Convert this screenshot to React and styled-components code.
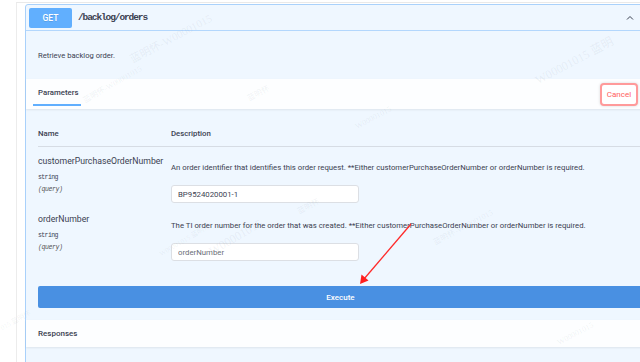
import React from "react";
import styled, { createGlobalStyle } from "styled-components";

const GlobalStyle = createGlobalStyle`
  html, body {
    margin: 0;
    padding: 0;
    background: #fff;
    overflow: hidden;
  }
  body {
    font-family: Roboto, "Open Sans", sans-serif;
    color: #3b4151;
  }
`;

const params = [
  {
    name: "customerPurchaseOrderNumber",
    description:
      "An order identifier that identifies this order request. **Either customerPurchaseOrderNumber or orderNumber is required.",
    value: "BP9524020001-1",
  },
  {
    name: "orderNumber",
    description:
      "The TI order number for the order that was created. **Either customerPurchaseOrderNumber or orderNumber is required.",
    value: "",
  },
];

const watermarks = [
  { x: 134, y: 50, size: 11, angle: -28, text: "蓝明怀-W00001015" },
  { x: 86, y: 94, size: 8, angle: -30, text: "蓝明怀-W00001015" },
  { x: 540, y: 70, size: 12, angle: -28, text: "W00001015  蓝明" },
  { x: 358, y: 122, size: 8, angle: -28, text: "W00001015" },
  { x: 300, y: 205, size: 8, angle: -28, text: "蓝明怀" },
  { x: 214, y: 244, size: 12, angle: -30, text: "W00001015" },
  { x: 162, y: 248, size: 7, angle: -30, text: "W00001015 蓝明怀" },
  { x: 436, y: 236, size: 8, angle: -28, text: "蓝明怀-W00001015" },
  { x: 3, y: 322, size: 7, angle: -28, text: "015  蓝明怀" },
  { x: 560, y: 338, size: 8, angle: -28, text: "W00001015" },
  { x: 250, y: 92, size: 8, angle: -28, text: "蓝明怀" },
];

function App() {
  return (
    <>
      <GlobalStyle />
      <Screen>
        <Frame>
          <OpBlock>
            <Summary>
              <Method>GET</Method>
              <Path>/backlog/orders</Path>
              <Chevron viewBox="0 0 20 20">
                <path d="M4 13 L10 7 L16 13" fill="none" stroke="#3b4151" strokeWidth="2" />
              </Chevron>
            </Summary>
            <Description>Retrieve backlog order.</Description>
            <SectionHeader>
              <Tab>Parameters</Tab>
              <CancelButton>Cancel</CancelButton>
            </SectionHeader>
            <ParamTable>
              <HeadCell>Name</HeadCell>
              <HeadCell>Description</HeadCell>
              <HeadRule />
              {params.map((p) => (
                <React.Fragment key={p.name}>
                  <NameCell>
                    <ParamName>{p.name}</ParamName>
                    <ParamType>string</ParamType>
                    <ParamIn>(query)</ParamIn>
                  </NameCell>
                  <DescCell>
                    <ParamDesc>{p.description}</ParamDesc>
                    <ParamInput
                      defaultValue={p.value}
                      placeholder={p.name}
                    />
                  </DescCell>
                </React.Fragment>
              ))}
            </ParamTable>
            <ExecuteWrapper>
              <ExecuteButton>Execute</ExecuteButton>
            </ExecuteWrapper>
            <ResponsesHeader>Responses</ResponsesHeader>
          </OpBlock>
        </Frame>
        {watermarks.map((w, i) => (
          <Watermark
            key={i}
            style={{
              left: w.x,
              top: w.y,
              fontSize: w.size,
              transform: `rotate(${w.angle}deg)`,
            }}
          >
            {w.text}
          </Watermark>
        ))}
        <Arrow viewBox="0 0 640 362">
          <path d="M411 224 L364 279" stroke="#ff2a2a" strokeWidth="1.3" fill="none" />
          <polygon points="360,284 361.5,274.5 368.5,280.5" fill="#ff1f1f" />
        </Arrow>
      </Screen>
    </>
  );
}

const Screen = styled.div`
  position: relative;
  width: 640px;
  height: 362px;
  overflow: hidden;
  background: #fff;
`;

const Frame = styled.div`
  margin: 2px 0 0 16px;
  height: 360px;
  border-top: 1px solid #e9e9e9;
  border-left: 1px solid #ececec;
  padding: 1px 0 0 8px;
  box-sizing: border-box;
`;

const OpBlock = styled.div`
  width: 631px;
  border: 1px solid #a9d1fb;
  border-radius: 3px;
  background: #eff7ff;
  box-sizing: border-box;
`;

const Summary = styled.div`
  display: flex;
  align-items: center;
  height: 26px;
  padding: 0 3px;
  border-bottom: 1px solid #b3d7fd;
  box-sizing: border-box;
`;

const Method = styled.div`
  width: 43px;
  height: 20px;
  border-radius: 2px;
  background: #61affe;
  color: #fff;
  font-size: 8.5px;
  font-weight: 500;
  display: flex;
  align-items: center;
  justify-content: center;
  text-shadow: 0 1px 0 rgba(0, 0, 0, 0.1);
`;

const Path = styled.div`
  margin-left: 6px;
  font-family: "Liberation Mono", "DejaVu Sans Mono", monospace;
  font-size: 9.5px;
  letter-spacing: -1.1px;
  font-weight: 700;
  color: #3b4151;
  flex: 1;
`;

const Chevron = styled.svg`
  width: 10px;
  height: 10px;
  margin-right: 17px;
`;

const Description = styled.div`
  height: 48px;
  padding: 0 12px;
  display: flex;
  align-items: center;
  font-size: 7.6px;
  color: #3b4151;
`;

const SectionHeader = styled.div`
  height: 30px;
  display: flex;
  align-items: center;
  justify-content: space-between;
  padding: 0 17px 0 7px;
  background: rgba(255, 255, 255, 0.85);
  box-shadow: 0 1px 2px rgba(0, 0, 0, 0.08);
`;

const Tab = styled.div`
  align-self: stretch;
  display: flex;
  align-items: center;
  padding: 2px 5px 0;
  font-size: 7.8px;
  font-weight: 500;
  color: #3b4151;
  border-bottom: 2px solid #61affe;
  box-sizing: border-box;
  height: 27px;
  width: 48px;
`;

const CancelButton = styled.button`
  width: 38px;
  height: 23px;
  padding: 0;
  border: 2px solid #ff9a9a;
  border-radius: 4px;
  background: #fff;
  color: #ff6060;
  font-family: Roboto, sans-serif;
  font-size: 8px;
  box-shadow: 0 0 3px rgba(0, 0, 0, 0.15);
`;

const ParamTable = styled.div`
  display: grid;
  grid-template-columns: 133px 1fr;
  padding: 20px 12px 0;
`;

const HeadCell = styled.div`
  font-size: 7.8px;
  font-weight: 500;
  color: #3b4151;
  height: 17px;
`;

const HeadRule = styled.div`
  grid-column: 1 / -1;
  border-top: 1px solid #d6dce4;
  height: 7px;
`;

const NameCell = styled.div`
  display: flex;
  flex-direction: column;
  height: 58px;
`;

const ParamName = styled.div`
  font-size: 8.7px;
  color: #3b4151;
  line-height: 14px;
`;

const ParamType = styled.div`
  font-family: "Liberation Mono", monospace;
  font-size: 6.5px;
  letter-spacing: -0.6px;
  color: #3b4151;
  margin-top: 6px;
`;

const ParamIn = styled.div`
  font-family: "Liberation Mono", monospace;
  font-size: 6.5px;
  letter-spacing: -0.4px;
  font-style: italic;
  color: #555;
  margin-top: 5px;
`;

const DescCell = styled.div`
  display: flex;
  flex-direction: column;
  padding-top: 8px;
`;

const ParamDesc = styled.div`
  font-size: 7.75px;
  color: #3b4151;
  line-height: 12px;
  white-space: nowrap;
`;

const ParamInput = styled.input`
  margin-top: 11px;
  width: 188px;
  height: 18px;
  box-sizing: border-box;
  border: 1px solid #dcdfe4;
  border-radius: 3px;
  background: #fff;
  padding: 0 6px;
  font-family: Roboto, sans-serif;
  font-size: 7.8px;
  color: #3b4151;
  outline: none;
  &::placeholder {
    color: #6b6f78;
  }
`;

const ExecuteWrapper = styled.div`
  padding: 16px 12px 12px;
`;

const ExecuteButton = styled.button`
  display: block;
  width: 100%;
  height: 22px;
  border: none;
  border-radius: 2px;
  background: #4990e2;
  color: #fff;
  font-family: Roboto, sans-serif;
  font-size: 8px;
  font-weight: 500;
`;

const ResponsesHeader = styled.div`
  height: 27px;
  padding: 0 12px;
  display: flex;
  align-items: center;
  background: rgba(255, 255, 255, 0.85);
  box-shadow: 0 1px 2px rgba(0, 0, 0, 0.08);
  font-size: 8px;
  font-weight: 500;
  color: #3b4151;
  margin-bottom: 40px;
`;

const Watermark = styled.div`
  position: absolute;
  transform-origin: left bottom;
  white-space: nowrap;
  font-family: "Liberation Serif", "Noto Sans CJK SC", serif;
  color: rgba(120, 130, 150, 0.1);
  pointer-events: none;
`;

const Arrow = styled.svg`
  position: absolute;
  left: 0;
  top: 0;
  width: 640px;
  height: 362px;
  pointer-events: none;
`;

export default App;
